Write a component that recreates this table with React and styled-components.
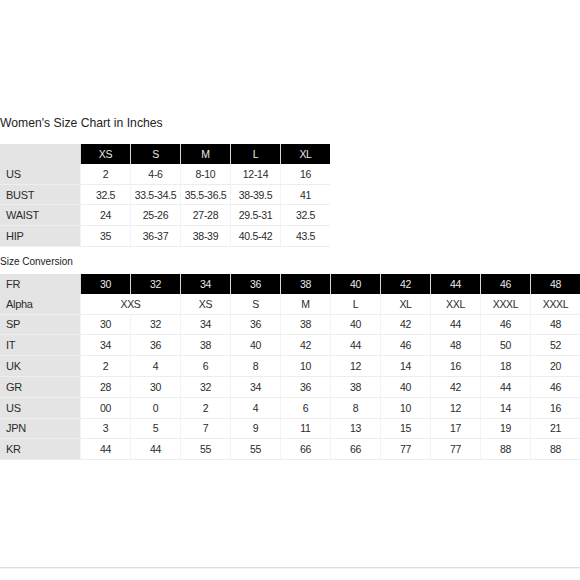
import React from 'react';
import styled, { createGlobalStyle } from 'styled-components';

const GlobalStyle = createGlobalStyle`
  html, body {
    margin: 0;
    padding: 0;
    background: #ffffff;
  }
  body {
    font-family: "Liberation Sans", Arial, sans-serif;
    color: #2b2b2b;
  }
`;

const sizes = ['XS', 'S', 'M', 'L', 'XL'];
const inchRows = [
  ['US', '2', '4-6', '8-10', '12-14', '16'],
  ['BUST', '32.5', '33.5-34.5', '35.5-36.5', '38-39.5', '41'],
  ['WAIST', '24', '25-26', '27-28', '29.5-31', '32.5'],
  ['HIP', '35', '36-37', '38-39', '40.5-42', '43.5'],
];

const frSizes = ['30', '32', '34', '36', '38', '40', '42', '44', '46', '48'];
const alpha = [
  { v: 'XXS', span: 2 },
  { v: 'XS' }, { v: 'S' }, { v: 'M' }, { v: 'L' },
  { v: 'XL' }, { v: 'XXL' }, { v: 'XXXL' }, { v: 'XXXL' },
];
const convRows = [
  ['SP', '30', '32', '34', '36', '38', '40', '42', '44', '46', '48'],
  ['IT', '34', '36', '38', '40', '42', '44', '46', '48', '50', '52'],
  ['UK', '2', '4', '6', '8', '10', '12', '14', '16', '18', '20'],
  ['GR', '28', '30', '32', '34', '36', '38', '40', '42', '44', '46'],
  ['US', '00', '0', '2', '4', '6', '8', '10', '12', '14', '16'],
  ['JPN', '3', '5', '7', '9', '11', '13', '15', '17', '19', '21'],
  ['KR', '44', '44', '55', '55', '66', '66', '77', '77', '88', '88'],
];

function App() {
  return (
    <>
      <GlobalStyle />
      <Page>
        <Title>Women's Size Chart in Inches</Title>
        <Table $cols={5}>
          <LabelCell $head />
          {sizes.map((s) => (
            <HeadCell key={s}>{s}</HeadCell>
          ))}
          {inchRows.map((row) => (
            <React.Fragment key={row[0]}>
              <LabelCell>{row[0]}</LabelCell>
              {row.slice(1).map((v, i) => (
                <BodyCell key={i}>{v}</BodyCell>
              ))}
            </React.Fragment>
          ))}
        </Table>

        <SubTitle>Size Conversion</SubTitle>
        <Table $cols={10} $conv>
          <LabelCell $head>FR</LabelCell>
          {frSizes.map((s) => (
            <HeadCell key={s}>{s}</HeadCell>
          ))}
          <LabelCell>Alpha</LabelCell>
          {alpha.map((a, i) => (
            <BodyCell key={i} $span={a.span}>{a.v}</BodyCell>
          ))}
          {convRows.map((row) => (
            <React.Fragment key={row[0]}>
              <LabelCell>{row[0]}</LabelCell>
              {row.slice(1).map((v, i) => (
                <BodyCell key={i}>{v}</BodyCell>
              ))}
            </React.Fragment>
          ))}
        </Table>

        <BottomRule />
      </Page>
    </>
  );
}

const Page = styled.div`
  width: 580px;
  height: 580px;
  padding-top: 116px;
  box-sizing: border-box;
  display: flex;
  flex-direction: column;
  overflow: hidden;
`;

const Title = styled.div`
  font-size: 12.2px;
  line-height: 14px;
  color: #222;
  margin-bottom: 14px;
`;

const SubTitle = styled.div`
  font-size: 10px;
  line-height: 12px;
  color: #222;
  margin-top: 9px;
  margin-bottom: 6px;
`;

const Table = styled.div`
  display: grid;
  grid-template-columns: 80px repeat(${(p) => p.$cols}, 50px);
  grid-auto-rows: ${(p) => (p.$conv ? '20.8px' : '20.7px')};
  grid-template-rows: 20px;
  width: ${(p) => 80 + p.$cols * 50}px;
  font-size: 10.5px;
`;

const cellBase = `
  display: flex;
  align-items: center;
  box-sizing: border-box;
  white-space: nowrap;
  letter-spacing: -0.3px;
`;

const LabelCell = styled.div`
  ${cellBase}
  padding-left: 6px;
  background: #e4e4e4;
  color: #2b2b2b;
  font-size: 11px;
  border-bottom: ${(p) => (p.$head ? '0' : '1px solid #eeeeee')};
`;

const HeadCell = styled.div`
  ${cellBase}
  justify-content: center;
  background: #000;
  color: #e8e8e8;
  border-left: 1px solid #d8d8d8;
`;

const BodyCell = styled.div`
  ${cellBase}
  justify-content: center;
  grid-column: span ${(p) => p.$span || 1};
  color: #2b2b2b;
  background: #fff;
  border-bottom: 1px solid #ededed;
  border-left: 1px solid #f3f3f3;
`;

const BottomRule = styled.div`
  margin-top: auto;
  margin-bottom: 12px;
  height: 1px;
  width: 100%;
  background: #dedede;
  box-shadow: 0 1px 0 #f4f4f4;
`;

export default App;
